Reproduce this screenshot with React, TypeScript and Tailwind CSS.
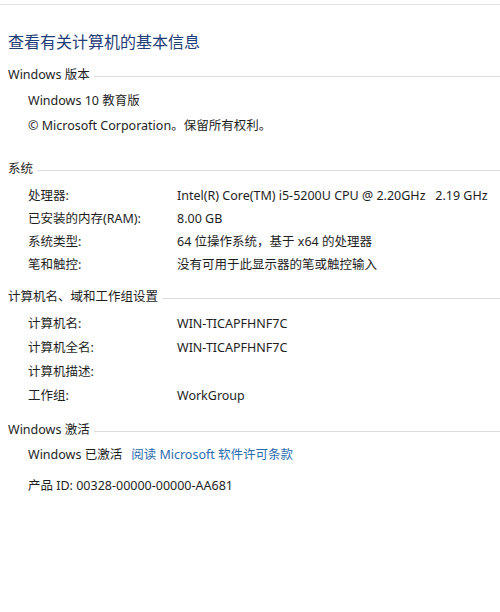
import React from 'react'

const font = { fontFamily: '"Noto Sans", "Noto Sans CJK SC", sans-serif' }

function SectionHeader({ title, className }: { title: string; className: string }) {
  return (
    <div className={`flex h-[20px] items-center pl-[8px] text-[12.5px] text-[#1e1e1e] ${className}`}>
      <span className="whitespace-nowrap">{title}</span>
      <div className="ml-[4px] mt-[3px] h-px flex-1 bg-[#dcdcdc]" />
    </div>
  )
}

function InfoRow({ label, value, h }: { label: string; value?: string; h: string }) {
  return (
    <div className={`flex items-center pl-[28px] text-[12.5px] text-[#1e1e1e] ${h}`}>
      <span className="w-[149px] shrink-0 whitespace-nowrap">{label}</span>
      <span className="whitespace-pre">{value}</span>
    </div>
  )
}

export default function App() {
  return (
    <div className="h-[612px] w-[500px] overflow-hidden bg-white" style={font}>
      <div className="mt-[4px] h-px bg-[#e3e3e3]" />

      <h1 className="mt-[25px] flex h-[24px] items-center pl-[8px] text-[16px] font-normal text-[#1f3d77]">
        查看有关计算机的基本信息
      </h1>

      <SectionHeader title="Windows 版本" className="mt-[11px]" />
      <div className="mt-[4px] flex h-[25px] items-center pl-[28px] text-[12.5px] text-[#1e1e1e]">
        Windows 10 教育版
      </div>
      <div className="flex h-[25px] items-center pl-[28px] text-[12.5px] text-[#1e1e1e]">
        © Microsoft Corporation。保留所有权利。
      </div>

      <SectionHeader title="系统" className="mt-[20px]" />
      <div className="mt-[6px]">
        <InfoRow h="h-[23px]" label="处理器:" value="Intel(R) Core(TM) i5-5200U CPU @ 2.20GHz   2.19 GHz" />
        <InfoRow h="h-[23px]" label="已安装的内存(RAM):" value="8.00 GB" />
        <InfoRow h="h-[23px]" label="系统类型:" value="64 位操作系统，基于 x64 的处理器" />
        <InfoRow h="h-[23px]" label="笔和触控:" value="没有可用于此显示器的笔或触控输入" />
      </div>

      <SectionHeader title="计算机名、域和工作组设置" className="mt-[10px]" />
      <div className="mt-[5px]">
        <InfoRow h="h-[24px]" label="计算机名:" value="WIN-TICAPFHNF7C" />
        <InfoRow h="h-[24px]" label="计算机全名:" value="WIN-TICAPFHNF7C" />
        <InfoRow h="h-[24px]" label="计算机描述:" />
        <InfoRow h="h-[24px]" label="工作组:" value="WorkGroup" />
      </div>

      <SectionHeader title="Windows 激活" className="mt-[12px]" />
      <div className="mt-[3px] flex h-[24px] items-center pl-[28px] text-[12.5px] text-[#1e1e1e]">
        <span>Windows 已激活</span>
        <a className="ml-[9px] text-[#2b6cb0]">阅读 Microsoft 软件许可条款</a>
      </div>
      <div className="mt-[7px] flex h-[24px] items-center pl-[28px] text-[12.5px] text-[#1e1e1e]">
        产品 ID: 00328-00000-00000-AA681
      </div>
    </div>
  )
}
